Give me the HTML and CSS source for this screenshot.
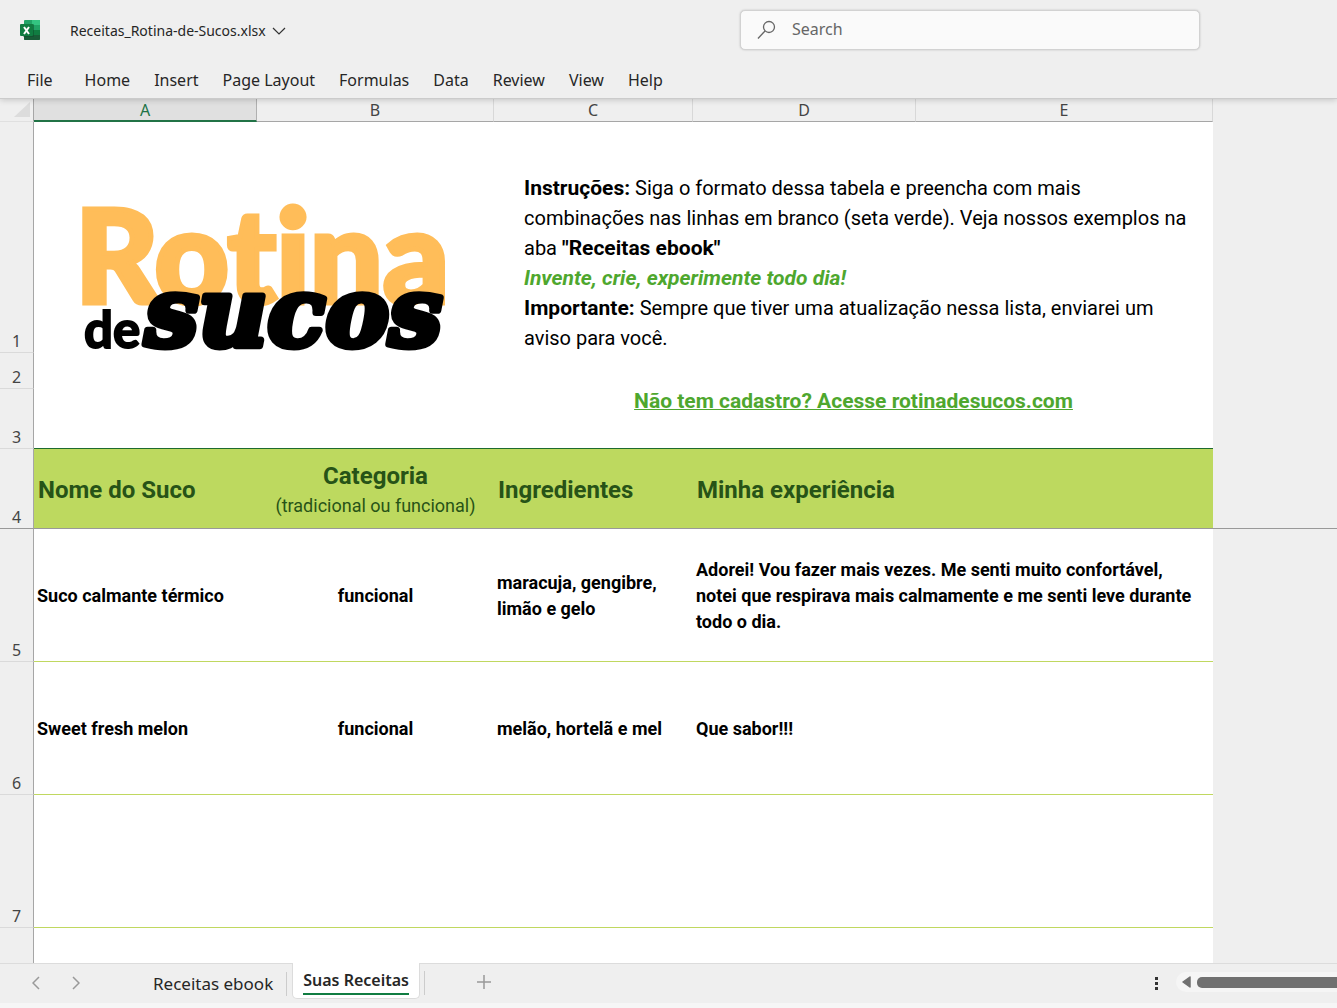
FILE: index.html
```html
<!DOCTYPE html>
<html lang="pt-BR">
<head>
  <meta charset="UTF-8" />
  <meta name="viewport" content="width=device-width, initial-scale=1.0"/>
  <title>Receitas_Rotina-de-Sucos.xlsx</title>
  <link rel="stylesheet" href="styles.css">
</head>
<body>
  <header class="top">
    <div class="title-bar">
      <svg class="app-icon" viewBox="0 0 20 20" aria-hidden="true">
        <rect x="4" y="0" width="16" height="20" rx="1" fill="#21a366"/>
        <rect x="12" y="0" width="8" height="5" fill="#33c481"/>
        <rect x="4" y="5" width="8" height="5" fill="#107c41"/>
        <rect x="4" y="10" width="16" height="5" fill="#107c41"/>
        <path d="M4 15h16v4a1 1 0 0 1-1 1H5a1 1 0 0 1-1-1z" fill="#185c37"/>
        <rect x="3" y="4" width="11" height="13" rx="1" fill="#0b4a2a" opacity=".5"/>
        <rect x="0" y="4" width="13" height="12" rx="1" fill="#107c41"/>
        <path d="M4 7l5 7M9 7l-5 7" stroke="#fff" stroke-width="2"/>
      </svg>
      <button class="file-name">Receitas_Rotina-de-Sucos.xlsx
        <svg width="14" height="8" viewBox="0 0 14 8" aria-hidden="true"><path d="M1 1l6 6 6-6" fill="none" stroke="#333" stroke-width="1.2"/></svg>
      </button>
      <label class="search">
        <svg width="20" height="20" viewBox="0 0 20 20" aria-hidden="true"><circle cx="12" cy="7" r="5.500"/><path d="M8 11l-7 7.500"/></svg>
        <input type="text" placeholder="Search" aria-label="Search">
      </label>
    </div>
    <nav class="ribbon">
      <button class="file-menu">File</button>
      <button>Home</button>
      <button>Insert</button>
      <button>Page Layout</button>
      <button>Formulas</button>
      <button>Data</button>
      <button>Review</button>
      <button>View</button>
      <button>Help</button>
    </nav>
  </header>

  <main class="sheet">
    <table>
      <colgroup>
        <col class="col-num">
        <col class="col-a">
        <col class="col-b">
        <col class="col-c">
        <col class="col-d">
        <col class="col-e">
        <col>
      </colgroup>
      <thead>
        <tr class="letters">
          <th class="corner"><svg width="16" height="16" viewBox="0 0 16 16" aria-hidden="true"><path d="M16 0v15H0z" fill="#dcdcdc"/></svg></th>
          <th class="selected">A</th>
          <th>B</th>
          <th>C</th>
          <th>D</th>
          <th>E</th>
          <td class="outside"></td>
        </tr>
      </thead>
      <tbody>
        <tr class="row-1">
          <th>1</th>
          <td class="logo-cell" colspan="2" rowspan="3">
            <svg class="logo" viewBox="0 0 380 160" role="img" aria-label="Rotina de Sucos">
              <text class="logo-rotina" x="-5" y="103">Rotina</text>
              <text class="logo-de" x="4" y="148">de</text>
              <text class="logo-sucos" x="65" y="146">sucos</text>
            </svg>
          </td>
          <td class="notes" colspan="3">
            <b>Instruções:</b> Siga o formato dessa tabela e preencha com mais<br>
            combinações nas linhas em branco (seta verde). Veja nossos exemplos na<br>
            aba <b>"Receitas ebook"</b><br>
            <em>Invente, crie, experimente todo dia!</em><br>
            <b>Importante:</b> Sempre que tiver uma atualização nessa lista, enviarei um<br>
            aviso para você.
          </td>
          <td class="outside"></td>
        </tr>
        <tr class="row-2">
          <th>2</th>
          <td colspan="3"></td>
          <td class="outside"></td>
        </tr>
        <tr class="row-3">
          <th>3</th>
          <td class="signup" colspan="3"><a href="#">Não tem cadastro? Acesse rotinadesucos.com</a></td>
          <td class="outside"></td>
        </tr>
        <tr class="headings">
          <th>4</th>
          <td>Nome do Suco</td>
          <td class="center">Categoria<small>(tradicional ou funcional)</small></td>
          <td>Ingredientes</td>
          <td colspan="2">Minha experiência</td>
          <td class="outside"></td>
        </tr>
        <tr class="recipe">
          <th>5</th>
          <td>Suco calmante térmico</td>
          <td class="center">funcional</td>
          <td>maracuja, gengibre,<br>limão e gelo</td>
          <td colspan="2">Adorei! Vou fazer mais vezes. Me senti muito confortável,<br>notei que respirava mais calmamente e me senti leve durante<br>todo o dia.</td>
          <td class="outside"></td>
        </tr>
        <tr class="recipe">
          <th>6</th>
          <td>Sweet fresh melon</td>
          <td class="center">funcional</td>
          <td>melão, hortelã e mel</td>
          <td colspan="2">Que sabor!!!</td>
          <td class="outside"></td>
        </tr>
        <tr class="recipe">
          <th>7</th>
          <td></td>
          <td></td>
          <td></td>
          <td colspan="2"></td>
          <td class="outside"></td>
        </tr>
        <tr class="recipe">
          <th></th>
          <td></td>
          <td></td>
          <td></td>
          <td colspan="2"></td>
          <td class="outside"></td>
        </tr>
      </tbody>
    </table>
  </main>

  <footer class="tabs-bar">
    <button class="arrow" aria-label="Previous sheet"><svg width="8" height="14" viewBox="0 0 8 14"><path d="M7 1L1 7l6 6"/></svg></button>
    <button class="arrow" aria-label="Next sheet"><svg width="8" height="14" viewBox="0 0 8 14"><path d="M1 1l6 6-6 6"/></svg></button>
    <button class="tab">Receitas ebook</button>
    <button class="tab active"><span>Suas Receitas</span></button>
    <button class="add" aria-label="New sheet"><svg width="14" height="14" viewBox="0 0 14 14"><path d="M7 0v14M0 7h14"/></svg></button>
    <button class="dots" aria-label="Resize scroll bar"><i></i><i></i><i></i></button>
    <div class="scroll">
      <svg width="9" height="12" viewBox="0 0 9 12" aria-hidden="true"><path d="M8 1v10L1 6z"/></svg>
      <div class="thumb"></div>
    </div>
  </footer>
</body>
</html>
```
FILE: styles.css
```css
* {
  box-sizing: border-box;
}

body {
  margin: 0;
  height: 100vh;
  display: flex;
  flex-direction: column;
  overflow: hidden;
  background: #efefef;
  color: #262626;
  font-family: "Noto Sans", sans-serif;
  font-size: 16px;
}

button {
  padding: 0;
  border: none;
  background: none;
  color: inherit;
  font: inherit;
  white-space: nowrap;
  cursor: pointer;
}

/* title and menus */

.top {
  position: relative;
  z-index: 1;
  border-bottom: 1px solid #cbcbcb;
  box-shadow: 0 1px 6px rgba(0, 0, 0, 0.18);
}

.title-bar {
  display: flex;
  align-items: center;
  height: 60px;
  padding-left: 20px;
}

.app-icon {
  width: 20px;
  height: 20px;
  margin-right: 30px;
}

.file-name {
  font-size: 14px;
}

.file-name svg {
  margin-left: 3px;
  margin-bottom: 1px;
}

.search {
  display: flex;
  align-items: center;
  width: 460px;
  height: 40px;
  margin-left: auto;
  margin-right: 137px;
  padding-left: 16px;
  background: #fafafa;
  border: 1px solid #d2d2d2;
  border-radius: 5px;
  box-shadow: 0 0 2px #bbb;
}

.search svg {
  fill: none;
  stroke: #666;
  stroke-width: 1.3;
}

.search input {
  flex: 1;
  margin-left: 15px;
  padding: 0 0 2px;
  border: none;
  outline: none;
  background: none;
  font: inherit;
}

.search input::placeholder {
  color: #666;
}

.ribbon {
  display: flex;
  gap: 24px;
  height: 38px;
  padding: 2px 27px 0;
}

.file-menu {
  margin-right: 8px;
}

/* spreadsheet */

.sheet {
  flex: 1;
  min-height: 0;
  overflow: hidden;
}

table {
  width: 100%;
  table-layout: fixed;
  border-collapse: separate;
  border-spacing: 0;
}

.col-num { width: 34px; }
.col-a { width: 223px; }
.col-b { width: 237px; }
.col-c { width: 199px; }
.col-d { width: 223px; }
.col-e { width: 297px; }

th {
  padding: 0;
  color: #444;
  font-weight: normal;
  line-height: 22px;
}

td {
  padding: 2px 3px 0;
  background: #fff;
  color: #000;
  font-family: Roboto, sans-serif;
  text-align: left;
  white-space: nowrap;
}

.letters th {
  height: 23px;
  line-height: 20px;
  border-right: 1px solid #d8d8d8;
  border-bottom: 1px solid #a6a6a6;
}

.letters .corner {
  text-align: right;
  line-height: 0;
  padding-right: 3px;
  border-right-color: #a6a6a6;
  border-bottom-color: #e0e0e0;
}

.letters .selected {
  background: #e0e0e0;
  color: #217346;
  border-right-color: #b0b0b0;
  border-bottom: 2px solid #217346;
}

tbody th {
  vertical-align: bottom;
  border-right: 1px solid #a6a6a6;
  border-bottom: 1px solid #dadada;
}

td.outside {
  background: #efefef;
}

.row-1 { height: 231px; }
.row-2 { height: 36px; }
.row-3 { height: 60px; }
.headings { height: 80px; }
.recipe { height: 133px; }

.logo-cell {
  padding: 0;
  border-bottom: 1px solid #1e6b2e;
}

.logo {
  display: block;
  width: 380px;
  height: 160px;
  margin: -10px 0 0 46px;
  overflow: visible;
}

.logo-rotina {
  fill: #ffbd59;
  stroke: #ffbd59;
  stroke-width: 5px;
  font: 900 129px Lato, sans-serif;
  font-variant-ligatures: none;
}

.logo-de {
  stroke: #000;
  stroke-width: 2px;
  font: bold 51px Lato, sans-serif;
}

.logo-sucos {
  stroke: #000;
  stroke-width: 7px;
  stroke-linejoin: round;
  font: italic bold 95px "DejaVu Serif", serif;
}

.notes {
  padding-left: 30px;
  padding-top: 0;
  vertical-align: bottom;
  font-size: 20px;
  line-height: 30px;
}

.notes b,
.notes em {
  font-size: 21px;
  font-weight: bold;
  line-height: 20px;
}

.notes em {
  color: #4ea72e;
}

.signup {
  padding-top: 0;
  vertical-align: top;
  border-bottom: 1px solid #1e6b2e;
  font-size: 21px;
  font-weight: bold;
  line-height: 24px;
  text-align: center;
}

.signup a {
  color: #4ea72e;
  text-decoration-thickness: 1px;
}

.headings td {
  padding-left: 4px;
  background: #bdd95f;
  color: #275317;
  font-size: 24px;
  font-weight: bold;
  line-height: 32px;
}

.headings small {
  display: block;
  font-size: 18px;
  font-weight: normal;
  line-height: 28px;
}

.headings th,
.headings td {
  border-bottom: 1px solid #999;
}

.headings .outside {
  background: #efefef;
}

.recipe td {
  border-bottom: 1px solid #c0d860;
  font-size: 18px;
  font-weight: bold;
  line-height: 26px;
}

.recipe td.outside {
  border-bottom: none;
}

.headings .center,
.recipe .center {
  padding: 2px 0 0;
  text-align: center;
}

/* sheet tabs */

.tabs-bar {
  display: flex;
  height: 45px;
  padding-left: 32px;
  border-top: 1px solid #dcdcdc;
  border-bottom: 5px solid #f6f6f6;
}

.tabs-bar svg {
  fill: none;
  stroke: #999;
  stroke-width: 1.5;
}

.arrow {
  width: 8px;
  margin-right: 32px;
}

.tab {
  height: 24px;
  margin: 8px 5px 0 41px;
  padding-right: 13px;
  border-right: 1px solid #ccc;
  font-size: 17px;
  line-height: 24px;
}

.tab.active {
  height: 36px;
  margin: -1px 0 0;
  padding: 0 10px;
  background: #fff;
  border: 1px solid #dcdcdc;
  border-top: none;
  border-radius: 0 0 5px 5px;
  font-size: 16px;
  font-weight: 600;
}

.tab.active span {
  display: block;
  line-height: 26px;
  border-bottom: 2px solid #107c41;
}

.add {
  height: 24px;
  margin: 7px 0 0 4px;
  padding-left: 52px;
  border-left: 1px solid #ccc;
}

.dots {
  display: flex;
  flex-direction: column;
  justify-content: center;
  gap: 2px;
  margin-left: auto;
  margin-right: 18px;
}

.dots i {
  width: 3px;
  height: 3px;
  background: #333;
}

.scroll {
  display: flex;
  align-items: center;
  gap: 6px;
  width: 161px;
  height: 20px;
  margin-top: 8px;
  padding-left: 6px;
  background: #f5f5f5;
  border-radius: 10px 0 0 10px;
}

.scroll svg {
  fill: #707070;
  stroke: #707070;
  stroke-linejoin: round;
}

.thumb {
  flex: 1;
  height: 11px;
  background: #707070;
  border-radius: 5px 0 0 5px;
}
```
